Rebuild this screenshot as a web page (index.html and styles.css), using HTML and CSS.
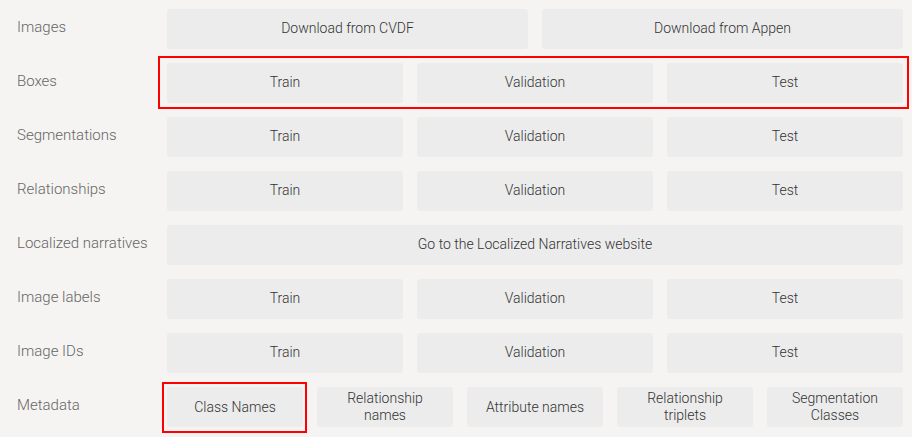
FILE: index.html
```html
<!DOCTYPE html>
<html lang="en">
<head>
  <meta charset="UTF-8" />
  <meta name="viewport" content="width=device-width, initial-scale=1" />
  <title>Open Images Download</title>
  <link rel="stylesheet" href="styles.css">
</head>
<body>

  <div class="table">
    <div class="label">Images</div>
    <div class="btns">
      <a class="btn" href="#">Download from CVDF</a>
      <a class="btn" href="#">Download from Appen</a>
    </div>

    <div class="label">Boxes</div>
    <div class="btns hl hl-row">
      <a class="btn" href="#">Train</a>
      <a class="btn" href="#">Validation</a>
      <a class="btn" href="#">Test</a>
    </div>

    <div class="label">Segmentations</div>
    <div class="btns">
      <a class="btn" href="#">Train</a>
      <a class="btn" href="#">Validation</a>
      <a class="btn" href="#">Test</a>
    </div>

    <div class="label">Relationships</div>
    <div class="btns">
      <a class="btn" href="#">Train</a>
      <a class="btn" href="#">Validation</a>
      <a class="btn" href="#">Test</a>
    </div>

    <div class="label">Localized narratives</div>
    <div class="btns">
      <a class="btn" href="#">Go to the Localized Narratives website</a>
    </div>

    <div class="label">Image labels</div>
    <div class="btns">
      <a class="btn" href="#">Train</a>
      <a class="btn" href="#">Validation</a>
      <a class="btn" href="#">Test</a>
    </div>

    <div class="label">Image IDs</div>
    <div class="btns">
      <a class="btn" href="#">Train</a>
      <a class="btn" href="#">Validation</a>
      <a class="btn" href="#">Test</a>
    </div>

    <div class="label">Metadata</div>
    <div class="btns small">
      <a class="btn hl hl-btn" href="#">Class Names</a>
      <a class="btn" href="#">Relationship names</a>
      <a class="btn" href="#">Attribute names</a>
      <a class="btn" href="#">Relationship triplets</a>
      <a class="btn" href="#">Segmentation Classes</a>
    </div>
  </div>

</body>
</html>
```

FILE: styles.css
```css
* {
  box-sizing: border-box;
}
body, html {
  margin: 0;
  padding: 0;
  background: #f5f4f2;
  font-family: Roboto, 'Liberation Sans', sans-serif;
  font-weight: 300;
}
.table {
  display: grid;
  grid-template-columns: 150px 736px;
  row-gap: 14px;
  padding: 9px 0 14px 17px;
}
.label {
  display: flex;
  align-items: center;
  height: 40px;
  padding-bottom: 4px;
  font-size: 15px;
  color: #666;
}
.btns {
  display: flex;
  gap: 14px;
}
.btn {
  flex: 1;
  height: 40px;
  display: flex;
  align-items: center;
  justify-content: center;
  text-align: center;
  background: #ececec;
  border-radius: 3px;
  color: #333;
  text-decoration: none;
  font-size: 14px;
  line-height: 17px;
  padding: 0 20px 2px;
}
.small .btn {
  flex: 0 0 136px;
  padding: 0 10px;
}
/* red highlight frames */
.hl {
  position: relative;
}
.hl::after {
  content: '';
  position: absolute;
  border: 2px solid #f00;
  pointer-events: none;
}
.hl-row::after {
  top: -7px; bottom: -6px;
  left: -9px; right: -6px;
}
.hl-btn::after {
  top: -5px; bottom: -6px;
  left: -5px; right: -4px;
}
```
